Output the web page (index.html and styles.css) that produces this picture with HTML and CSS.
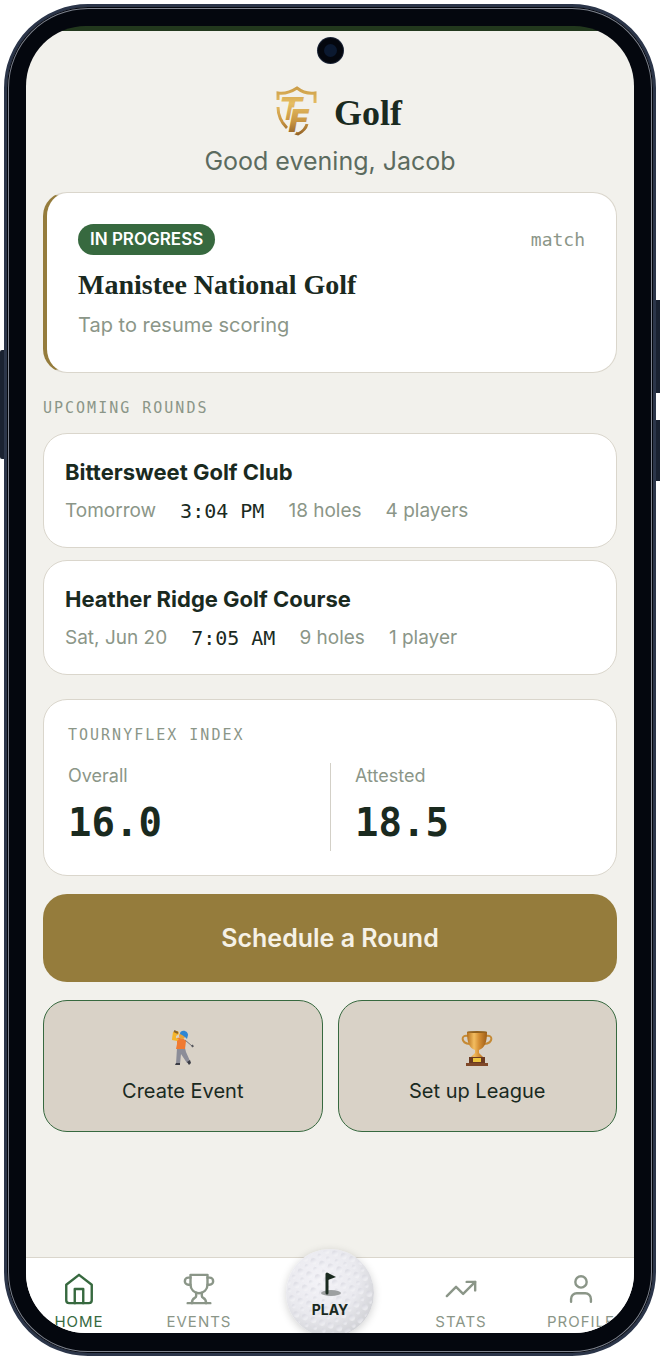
FILE: index.html
```html
<!DOCTYPE html>
<html lang="en">
<head>
  <meta charset="UTF-8">
  <meta name="viewport" content="width=device-width, initial-scale=1.0">
  <title>TournyFlex Golf</title>
  <link rel="stylesheet" href="styles.css">
</head>
<body>
  <div class="phone">
    <span class="side-key key-left"></span>
    <span class="side-key key-right-top"></span>
    <span class="side-key key-right-bottom"></span>
    <span class="camera"></span>

    <div class="screen">
      <main class="content">
        <!-- Header -->
        <header class="header">
          <div class="brand">
            <svg class="logo" viewBox="0 0 42 50" aria-label="TournyFlex">
              <defs>
                <linearGradient id="gold" x1="0" y1="0" x2="0" y2="50" gradientUnits="userSpaceOnUse">
                  <stop offset="0" stop-color="#c99a45"/>
                  <stop offset="0.35" stop-color="#e6bd62"/>
                  <stop offset="0.7" stop-color="#c99643"/>
                  <stop offset="1" stop-color="#8f5f25"/>
                </linearGradient>
              </defs>
              <g fill="none" stroke="url(#gold)" stroke-width="3">
                <path d="M2 14V7c7 1 13-1 19-5c5 4 11 6 18 5v10"/>
                <path d="M2 21c0 9 4 16 9 21"/>
                <path d="M19 47l3 1c4-2 8-6 9-10"/>
              </g>
              <text class="logo-letters" fill="url(#gold)"><tspan x="4" y="34">T</tspan><tspan x="12" y="46">F</tspan></text>
            </svg>
            <h1>Golf</h1>
          </div>
          <p class="greeting">Good evening, Jacob</p>
        </header>

        <!-- Active round -->
        <a class="card active-round" href="#resume">
          <div class="active-top">
            <span class="badge">IN PROGRESS</span>
            <span class="match-type">match</span>
          </div>
          <h2>Manistee National Golf</h2>
          <p class="hint">Tap to resume scoring</p>
        </a>

        <!-- Upcoming -->
        <section class="upcoming">
          <h3 class="label">UPCOMING ROUNDS</h3>
          <a class="card round" href="#bittersweet">
            <h4>Bittersweet Golf Club</h4>
            <div class="round-info">
              <span>Tomorrow</span>
              <span class="time">3:04 PM</span>
              <span>18 holes</span>
              <span>4 players</span>
            </div>
          </a>
          <a class="card round" href="#heather-ridge">
            <h4>Heather Ridge Golf Course</h4>
            <div class="round-info">
              <span>Sat, Jun 20</span>
              <span class="time">7:05 AM</span>
              <span>9 holes</span>
              <span>1 player</span>
            </div>
          </a>
        </section>

        <!-- Index -->
        <section class="card index-card">
          <h3 class="label">TOURNYFLEX INDEX</h3>
          <div class="index-grid">
            <div class="index-item">
              <span class="index-name">Overall</span>
              <span class="index-value">16.0</span>
            </div>
            <div class="index-item">
              <span class="index-name">Attested</span>
              <span class="index-value">18.5</span>
            </div>
          </div>
        </section>

        <button class="schedule-btn" type="button">Schedule a Round</button>

        <div class="tiles">
          <button class="tile" type="button">
            <svg class="tile-icon" viewBox="0 0 36 36" aria-hidden="true">
              <path d="M20 10l7 6" stroke="#77777b" stroke-width="1"/>
              <path d="M27 15l1 2" stroke="#55565c" stroke-width="2"/>
              <path d="M12 18h8l1 4 4 9-3 2-6-9-1 10h-4z" fill="#8c8d98"/>
              <path d="M11 33h4v2h-5zM22 32l3-2 1 3-2 2z" fill="#3b3c45"/>
              <path d="M12 8c3-1 7 0 9 3l-1 8h-9l1-5z" fill="#f07a31"/>
              <path d="M7 9l1-7 5-1 1 3-3 2v2l3 1-2 2-5-1z" fill="#f5b52c"/>
              <circle cx="17" cy="6" r="3" fill="#e7a13a"/>
              <path d="M15 4c0-5 8-4 8 1l-1 4c-2-2-4-4-7-5z" fill="#2f86d3"/>
              <path d="M9 1l4 2" stroke="#8c6428" stroke-width="2"/>
            </svg>
            <span>Create Event</span>
          </button>
          <button class="tile" type="button">
            <svg class="tile-icon" viewBox="0 0 36 36" aria-hidden="true">
              <defs>
                <linearGradient id="cup" x1="0" x2="1">
                  <stop offset="0" stop-color="#b5701d"/>
                  <stop offset="0.35" stop-color="#f3bd60"/>
                  <stop offset="0.6" stop-color="#d58f34"/>
                  <stop offset="1" stop-color="#9e5d17"/>
                </linearGradient>
              </defs>
              <path d="M9 6c-7-2-8 7 2 8M27 6c7-2 8 7-2 8" fill="none" stroke="#c58a35" stroke-width="2"/>
              <path d="M8 2h20c0 10-2 16-8 18v3l4 4H12l4-4v-3C10 18 8 12 8 2z" fill="url(#cup)"/>
              <ellipse cx="18" cy="2" rx="10" ry="1" fill="#92611d"/>
              <path d="M10 27h16v6H10z" fill="#6c3a20"/>
              <path d="M7 33h22v3H7z" fill="#804828"/>
              <path d="M14 28h8v4h-8z" fill="#edc43e"/>
            </svg>
            <span>Set up League</span>
          </button>
        </div>
      </main>

      <!-- Bottom nav -->
      <nav class="bottom-nav">
        <a class="nav-item current" href="#home">
          <svg class="nav-icon" viewBox="0 0 24 24" aria-hidden="true">
            <path d="M3 9l9-7 9 7v11a2 2 0 0 1-2 2H5a2 2 0 0 1-2-2z"/>
            <path d="M9 22V12h6v10"/>
          </svg>
          <span>HOME</span>
        </a>
        <a class="nav-item" href="#events">
          <svg class="nav-icon" viewBox="0 0 24 24" aria-hidden="true">
            <path d="M6 9H4.500a2.500 2.500 0 0 1 0-5H6M18 9h1.500a2.500 2.500 0 0 0 0-5H18M4 22h16"/>
            <path d="M10 14.660V17c0 .55-.47.98-.97 1.210C7.850 18.750 7 20.240 7 22M14 14.660V17c0 .55.47.98.97 1.210C16.150 18.750 17 20.240 17 22"/>
            <path d="M18 2H6v7a6 6 0 0 0 12 0V2z"/>
          </svg>
          <span>EVENTS</span>
        </a>
        <a class="play" href="#play">
          <svg class="ball" viewBox="0 0 88 88" aria-hidden="true">
            <defs>
              <radialGradient id="ballShade" cx="0.4" cy="0.35" r="0.7">
                <stop offset="0" stop-color="#f4f3f8"/>
                <stop offset="0.6" stop-color="#e9e9ee"/>
                <stop offset="1" stop-color="#cfd0d4"/>
              </radialGradient>
              <linearGradient id="dimple" x1="0" y1="0" x2="1" y2="1">
                <stop offset="0" stop-color="#c9c9d3"/>
                <stop offset="0.5" stop-color="#e8e8ee"/>
                <stop offset="1" stop-color="#ffffff"/>
              </linearGradient>
              <pattern id="dimples" width="9" height="14" patternUnits="userSpaceOnUse" patternTransform="rotate(18)">
                <circle cx="3" cy="3" r="3" fill="url(#dimple)"/>
                <circle cx="7" cy="10" r="2" fill="url(#dimple)"/>
              </pattern>
            </defs>
            <circle cx="44" cy="44" r="44" fill="url(#ballShade)"/>
            <circle cx="44" cy="44" r="43" fill="url(#dimples)" opacity="0.7"/>
            <ellipse cx="45" cy="44" rx="10" ry="3" fill="#9c9fa0"/>
            <path d="M41 44V25" stroke="#1a2a1f" stroke-width="3" stroke-linecap="round"/>
            <path d="M42 24l8 4-8 3z" fill="#1a2a1f"/>
          </svg>
          <span class="play-text">PLAY</span>
        </a>
        <a class="nav-item" href="#stats">
          <svg class="nav-icon" viewBox="0 0 24 24" aria-hidden="true">
            <path d="M22 7l-8.500 8.500-5-5L2 17"/>
            <path d="M16 7h6v6"/>
          </svg>
          <span>STATS</span>
        </a>
        <a class="nav-item" href="#profile">
          <svg class="nav-icon" viewBox="0 0 24 24" aria-hidden="true">
            <path d="M19 21v-2a4 4 0 0 0-4-4H9a4 4 0 0 0-4 4v2"/>
            <circle cx="12" cy="7" r="4"/>
          </svg>
          <span>PROFILE</span>
        </a>
      </nav>
    </div>
  </div>
</body>
</html>
```
FILE: styles.css
```css
* {
  margin: 0;
  padding: 0;
  box-sizing: border-box;
}

body {
  min-height: 100vh;
  display: flex;
  padding: 4px;
  background-color: #fff;
  font-family: Inter, "Open Sans", sans-serif;
  color: #1a2a1f;
}

a {
  color: inherit;
  text-decoration: none;
}

button {
  font-family: inherit;
  cursor: pointer;
}

/* Phone frame */
.phone {
  position: relative;
  flex: 1;
  display: flex;
  padding: 19px 19px 20px;
  border: 3px solid #2b3549;
  border-radius: 84px;
  background-color: #04070e;
  box-shadow: inset 0 0 0 1px #04070e, inset 0 0 0 2px #7d828d;
}

.side-key {
  position: absolute;
  width: 4px;
  background-color: #1a2231;
}

.key-left {
  left: -7px;
  top: 343px;
  height: 109px;
  border-radius: 2px 0 0 2px;
}

.key-right-top {
  right: -7px;
  top: 293px;
  height: 93px;
}

.key-right-bottom {
  right: -7px;
  top: 413px;
  height: 61px;
}

.camera {
  position: absolute;
  top: 31px;
  left: 50%;
  width: 25px;
  height: 25px;
  margin-left: -12px;
  border: 6px solid #04070e;
  border-radius: 50%;
  background-color: #0b1930;
  box-shadow: 0 0 0 1px #1b2436;
}

.screen {
  flex: 1;
  min-width: 0;
  display: flex;
  flex-direction: column;
  border-radius: 60px;
  background: linear-gradient(#22381d 5px, #f2f1ec 5px);
  overflow: hidden;
}

.content {
  flex: 1;
  display: flex;
  flex-direction: column;
  padding: 57px 17px 40px;
}

/* Header */
.header {
  display: flex;
  flex-direction: column;
  align-items: center;
  margin-bottom: 14px;
}

.brand {
  display: flex;
  align-items: center;
  gap: 16px;
  padding-left: 18px;
}

.logo {
  width: 42px;
  height: 56px;
  overflow: visible;
}

.logo-letters {
  font-family: "DejaVu Sans", sans-serif;
  font-size: 32px;
  font-weight: 700;
  font-style: italic;
  stroke: #f2f1ec;
  stroke-width: 3px;
  paint-order: stroke;
}

h1,
h2 {
  font-family: "Liberation Serif", serif;
  font-weight: 700;
}

h1 {
  padding-top: 4px;
  font-size: 36px;
  line-height: 44px;
}

.greeting {
  margin-top: 5px;
  font-size: 25px;
  line-height: 34px;
  color: #5c6b5f;
}

/* Cards */
.card {
  display: block;
  border: 1px solid #dad6cc;
  border-radius: 24px;
  background-color: #fff;
}

.active-round {
  padding: 31px 31px 33px;
  border-left: 4px solid #957c3c;
}

.active-top {
  display: flex;
  align-items: center;
  justify-content: space-between;
  margin-bottom: 12px;
}

.badge {
  padding: 0 12px;
  border-radius: 16px;
  background-color: #37693f;
  color: #fff;
  font-size: 17px;
  font-weight: 600;
  line-height: 31px;
}

.match-type {
  font-family: "DejaVu Sans Mono", monospace;
  font-size: 18px;
  color: #8b9688;
}

h2 {
  font-size: 28px;
  line-height: 36px;
}

.hint {
  margin-top: 8px;
  font-size: 20px;
  line-height: 28px;
  color: #8b9688;
}

.label {
  font-family: "DejaVu Sans Mono", monospace;
  font-size: 15px;
  font-weight: 400;
  line-height: 20px;
  letter-spacing: 2px;
  color: #8b9688;
}

.upcoming {
  display: flex;
  flex-direction: column;
  gap: 12px;
  margin-top: 25px;
}

.upcoming .label {
  margin-bottom: 3px;
}

.round {
  padding: 22px 21px 21px;
}

h4 {
  font-size: 22px;
  font-weight: 700;
  line-height: 32px;
}

.round-info {
  display: flex;
  flex-wrap: wrap;
  column-gap: 24px;
  margin-top: 8px;
  font-size: 19px;
  line-height: 30px;
  color: #8b9688;
}

.time {
  font-family: "DejaVu Sans Mono", monospace;
  font-size: 20px;
  color: #1a2a1f;
}

.index-card {
  margin-top: 24px;
  padding: 25px 24px 24px;
}

.index-grid {
  display: grid;
  grid-template-columns: 1fr 1fr;
  margin-top: 18px;
}

.index-item {
  display: flex;
  flex-direction: column;
}

.index-item + .index-item {
  padding-left: 24px;
  border-left: 1px solid #d3d0c7;
}

.index-name {
  font-size: 18px;
  line-height: 26px;
  color: #8b9688;
}

.index-value {
  margin-top: 6px;
  font-family: "DejaVu Sans Mono", monospace;
  font-size: 39px;
  font-weight: 700;
  line-height: 56px;
}

/* Buttons */
.schedule-btn {
  margin-top: 18px;
  border: none;
  border-radius: 24px;
  background-color: #957c3c;
  color: #f5f1e6;
  font-size: 25px;
  font-weight: 600;
  line-height: 88px;
}

.tiles {
  display: grid;
  grid-template-columns: 1fr 1fr;
  gap: 15px;
  margin-top: 18px;
}

.tile {
  display: flex;
  flex-direction: column;
  align-items: center;
  gap: 10px;
  padding: 29px 8px 25px;
  border: 1px solid #37693f;
  border-radius: 24px;
  background-color: #d9d2c7;
  color: #1a2a1f;
  font-size: 20px;
  font-weight: 400;
  line-height: 30px;
}

.tile-icon {
  width: 36px;
  height: 36px;
}

/* Bottom nav */
.bottom-nav {
  display: grid;
  grid-template-columns: 53fr 67fr 64fr 67fr 53fr;
  height: 76px;
  border-top: 1px solid #dad6cc;
  background-color: #fff;
}

.nav-item {
  display: flex;
  flex-direction: column;
  align-items: center;
  gap: 6px;
  padding-top: 14px;
  font-size: 15px;
  line-height: 20px;
  letter-spacing: 1px;
  color: #8b9688;
}

.nav-item.current {
  color: #37693f;
}

.nav-icon {
  width: 34px;
  height: 34px;
  fill: none;
  stroke: currentColor;
  stroke-width: 1.7;
  stroke-linecap: round;
  stroke-linejoin: round;
}

.play {
  position: relative;
  width: 88px;
  height: 88px;
  margin-top: -9px;
  justify-self: center;
  border-radius: 50%;
  box-shadow: 0 2px 8px rgba(0, 0, 0, 0.18);
}

.ball {
  display: block;
  width: 88px;
  height: 88px;
}

.play-text {
  position: absolute;
  left: 0;
  right: 0;
  top: 52px;
  text-align: center;
  font-size: 14px;
  font-weight: 700;
  line-height: 18px;
}
```
